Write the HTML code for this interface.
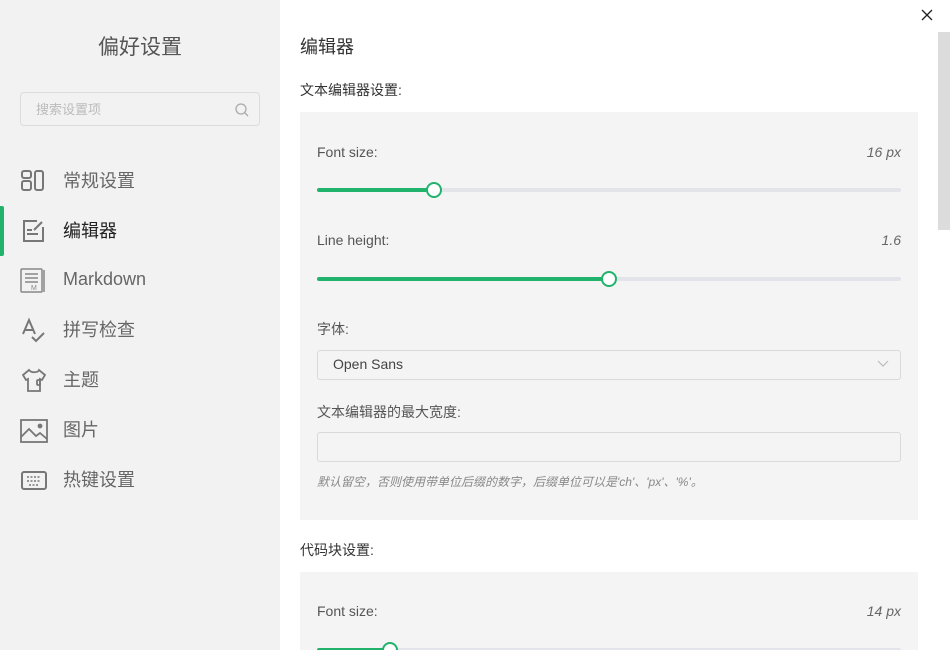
<!DOCTYPE html><html><head><meta charset="utf-8"><style>
*{margin:0;padding:0;box-sizing:border-box}
html,body{width:950px;height:650px;overflow:hidden}
body{background:#fff;font-family:"Liberation Sans","Noto Sans CJK SC",sans-serif;position:relative}
.side{position:absolute;left:0;top:0;width:280px;height:650px;background:#f2f2f2}
.t{position:absolute;white-space:nowrap}
.nav{position:absolute;left:63px;font-size:18px;color:#666}
.ic{position:absolute;left:20px}
.panel{position:absolute;left:300px;width:618px;background:#f4f4f4}
.lbl{position:absolute;left:317px;font-size:14px;color:#555}
.val{position:absolute;right:49px;font-size:14px;color:#666;font-style:italic}
.track{position:absolute;left:317px;width:584px;height:4px;background:#e3e4ea;border-radius:2px}
.fill{position:absolute;left:0;top:0;height:4px;background:#21b36b;border-radius:2px}
.thumb{position:absolute;top:-6px;width:16px;height:16px;border:2px solid #21b36b;background:#fff;border-radius:50%}
.box{position:absolute;left:317px;width:584px;border:1px solid #dadada;border-radius:3px;background:#f4f4f4}
</style></head><body>
<div class="side">
<div class="t" style="left:0;width:280px;text-align:center;top:31px;font-size:21px;color:#555">偏好设置</div>
<div style="position:absolute;left:20px;top:92px;width:240px;height:34px;border:1px solid #dcdcdc;border-radius:4px"></div>
<div class="t" style="left:36px;top:99px;font-size:13px;color:#bbb">搜索设置项</div>
<svg style="position:absolute;left:235px;top:103px" width="14" height="14"><circle cx="6" cy="6" r="5" fill="none" stroke="#aaa" stroke-width="1.3"/><line x1="10" y1="10" x2="13" y2="13" stroke="#aaa" stroke-width="1.3"/></svg>
<div style="position:absolute;left:0;top:206px;width:4px;height:50px;background:#21b36b;border-radius:0 2px 2px 0"></div>
<svg class="ic" style="top:169px" width="26" height="24" fill="none" stroke="#777" stroke-width="2"><rect x="2" y="2" width="9" height="7" rx="2"/><rect x="2" y="12" width="9" height="9" rx="2"/><rect x="15" y="2" width="8" height="19" rx="2"/></svg>
<div class="nav" style="top:167px">常规设置</div>
<svg class="ic" style="top:218px" width="26" height="26" fill="none" stroke="#777" stroke-width="2"><path d="M17 3H4v20h19V9"/><path d="M14 12L22 4"/><line x1="7" y1="12" x2="12" y2="12"/><line x1="7" y1="16" x2="18" y2="16"/></svg>
<div class="nav" style="top:217px;color:#222">编辑器</div>
<svg class="ic" style="top:268px" width="26" height="26" fill="none" stroke="#888" stroke-width="1.5"><rect x="1" y="1" width="21" height="23" rx="1"/><line x1="24" y1="2" x2="24" y2="24"/><line x1="5" y1="6" x2="18" y2="6"/><line x1="5" y1="10" x2="18" y2="10"/><line x1="5" y1="14" x2="18" y2="14"/><text x="11" y="22" font-size="7" fill="#888" stroke="none">M</text></svg>
<div class="nav" style="top:269px">Markdown</div>
<svg class="ic" style="top:317px" width="28" height="28" fill="none" stroke="#777" stroke-width="2"><path d="M3 17L9 3l6 14M5 13h8"/><path d="M12 20l4 4 8-8"/></svg>
<div class="nav" style="top:316px">拼写检查</div>
<svg class="ic" style="top:367px" width="28" height="28" fill="none" stroke="#777" stroke-width="1.8"><path d="M9 3L3 8l3 5 2-1v12h12V12l2 1 3-5-6-5c-1 3-8 3-10 0z"/><rect x="17" y="13" width="3" height="5" rx="1"/></svg>
<div class="nav" style="top:366px">主题</div>
<svg class="ic" style="top:418px" width="28" height="26" fill="none" stroke="#777" stroke-width="1.8"><rect x="1" y="2" width="26" height="22"/><path d="M1 19l8-8 7 7 4-3 7 6"/><circle cx="20" cy="8" r="1.5" fill="#777"/></svg>
<div class="nav" style="top:416px">图片</div>
<svg class="ic" style="top:469px" width="28" height="24" fill="none" stroke="#777" stroke-width="2"><rect x="2" y="3" width="24" height="17" rx="2"/><path d="M7 8h14M7 12h14M9 16h10" stroke-dasharray="2 1.5" stroke-width="1.5"/></svg>
<div class="nav" style="top:466px">热键设置</div>
</div>
<div class="t" style="left:300px;top:33px;font-size:18px;color:#333">编辑器</div>
<div class="t" style="left:300px;top:80px;font-size:14px;color:#333">文本编辑器设置:</div>
<div class="panel" style="top:112px;height:408px"></div>
<div class="lbl" style="top:144px">Font size:</div><div class="val" style="top:144px">16 px</div>
<div class="track" style="top:188px"><div class="fill" style="width:117px"></div><div class="thumb" style="left:109px"></div></div>
<div class="lbl" style="top:232px">Line height:</div><div class="val" style="top:232px">1.6</div>
<div class="track" style="top:277px"><div class="fill" style="width:292px"></div><div class="thumb" style="left:284px"></div></div>
<div class="lbl" style="top:319px">字体:</div>
<div class="box" style="top:350px;height:30px"></div>
<div class="t" style="left:333px;top:356px;font-size:14px;color:#444">Open Sans</div>
<svg style="position:absolute;left:877px;top:360px" width="12" height="8"><path d="M1 1l5 5 5-5" fill="none" stroke="#bbb" stroke-width="1.2"/></svg>
<div class="lbl" style="top:402px">文本编辑器的最大宽度:</div>
<div class="box" style="top:432px;height:30px"></div>
<div class="t" style="left:317px;top:473px;font-size:12px;color:#888;font-style:italic">默认留空，否则使用带单位后缀的数字，后缀单位可以是'ch'、'px'、'%'。</div>
<div class="t" style="left:300px;top:540px;font-size:14px;color:#333">代码块设置:</div>
<div class="panel" style="top:572px;height:90px"></div>
<div class="lbl" style="top:603px">Font size:</div><div class="val" style="top:603px">14 px</div>
<div class="track" style="top:648px"><div class="fill" style="width:73px"></div><div class="thumb" style="left:65px"></div></div>
<div style="position:absolute;left:938px;top:32px;width:12px;height:198px;background:#dcdcdc"></div>
<svg style="position:absolute;left:921px;top:9px" width="12" height="12"><path d="M1 1l10 10M11 1L1 11" stroke="#222" stroke-width="1.3"/></svg>
</body></html>
